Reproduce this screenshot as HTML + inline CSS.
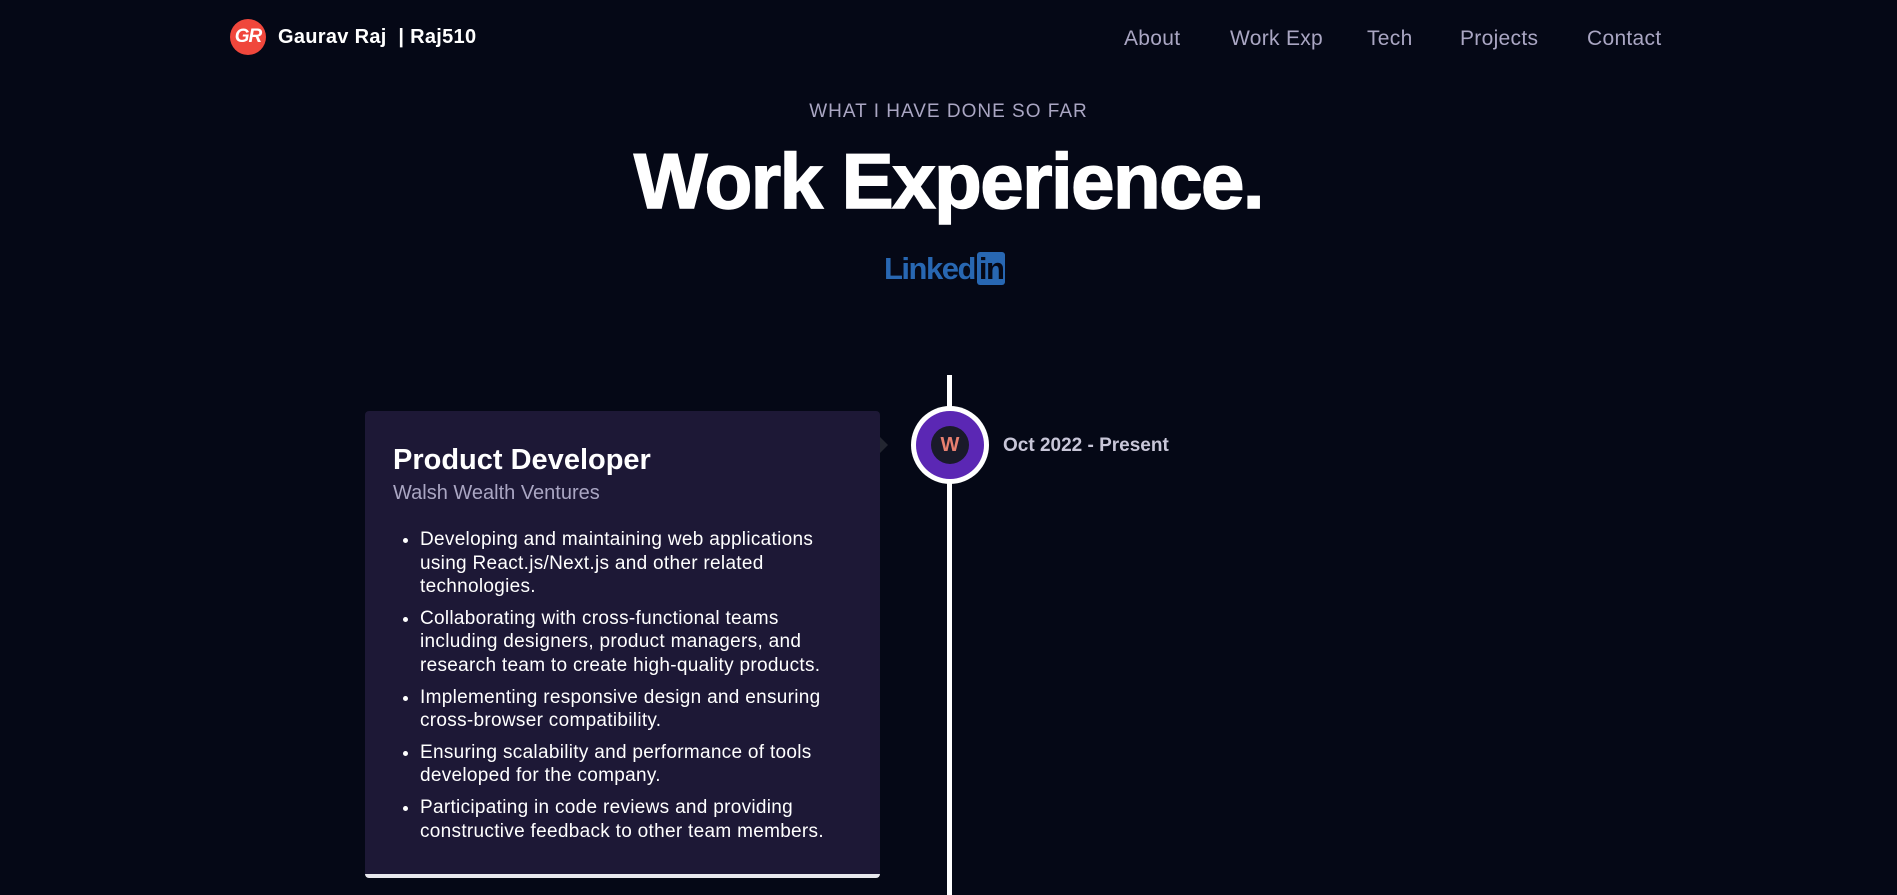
<!DOCTYPE html>
<html><head><meta charset="utf-8"><style>
*{margin:0;padding:0;box-sizing:border-box}
body{width:1897px;height:883px;background:#050816;overflow:hidden;font-family:"Liberation Sans",sans-serif;position:relative;color:#fff}
.abs{position:absolute}
.logo{left:230px;top:19px;width:36px;height:36px;border-radius:50%;background:#f0473c;color:#fff;font-weight:bold;font-size:19px;line-height:36px;text-align:center;letter-spacing:-1px;font-style:italic}
.brand{left:278px;top:26px;font-size:20px;font-weight:bold;letter-spacing:0.3px}
.nav{top:27px;font-size:21px;color:#aaa6c3;letter-spacing:0.3px}
.sub{left:0;width:1897px;text-align:center;top:101px;font-size:19px;color:#aaa6c3;letter-spacing:1px}
.title{left:0;width:1897px;text-align:center;top:136px;font-size:78px;font-weight:900;letter-spacing:-1.5px;-webkit-text-stroke:1.5px #fff}
.li{left:884px;top:251px;font-size:31px;font-weight:bold;color:#2867b2;letter-spacing:-1.5px}
.li span{display:inline-block;background:#2867b2;color:#050816;border-radius:3px;padding:0 2px;margin-left:2px;line-height:33px}
.line{left:947px;top:375px;width:5px;height:520px;background:#fff}
.circ{left:911px;top:406px;width:78px;height:78px;border-radius:50%;background:#fff;padding:5px}
.circ div{width:68px;height:68px;border-radius:50%;background:#5b27b4;display:flex;align-items:center;justify-content:center}
.circ div span{width:38px;height:38px;border-radius:50%;background:#1a1a2a;color:#e88070;font-weight:900;font-size:20px;line-height:38px;text-align:center}
.date{left:1003px;top:435px;font-size:19px;font-weight:bold;color:#c8c6d8}
.card{left:365px;top:411px;width:515px;height:467px;background:#1d1836;border-radius:4px;border-bottom:4px solid #e8e8ee}
.arrow{left:880px;top:437px;width:0;height:0;border-top:8px solid transparent;border-bottom:8px solid transparent;border-left:8px solid #232631}
h3{position:absolute;left:28px;top:33px;font-size:29px;font-weight:bold}
.co{position:absolute;left:28px;top:71px;font-size:20px;color:#aaa6c3}
ul{position:absolute;left:55px;top:117px;font-size:19px;letter-spacing:0.3px;line-height:23.6px;white-space:nowrap;color:#fff}
li{margin-bottom:8px;padding-left:0}
</style></head><body>
<div class="abs logo">GR</div>
<div class="abs brand">Gaurav Raj &nbsp;| Raj510</div>
<div class="abs nav" style="left:1124px">About</div>
<div class="abs nav" style="left:1230px">Work Exp</div>
<div class="abs nav" style="left:1367px">Tech</div>
<div class="abs nav" style="left:1460px">Projects</div>
<div class="abs nav" style="left:1587px">Contact</div>
<div class="abs sub">WHAT I HAVE DONE SO FAR</div>
<div class="abs title">Work Experience.</div>
<div class="abs li">Linked<span>in</span></div>
<div class="abs line"></div>
<div class="abs circ"><div><span>W</span></div></div>
<div class="abs date">Oct 2022 - Present</div>
<div class="abs arrow"></div>
<div class="abs card">
<h3>Product Developer</h3>
<div class="co">Walsh Wealth Ventures</div>
<ul>
<li>Developing and maintaining web applications<br>using React.js/Next.js and other related<br>technologies.</li>
<li>Collaborating with cross-functional teams<br>including designers, product managers, and<br>research team to create high-quality products.</li>
<li>Implementing responsive design and ensuring<br>cross-browser compatibility.</li>
<li>Ensuring scalability and performance of tools<br>developed for the company.</li>
<li>Participating in code reviews and providing<br>constructive feedback to other team members.</li>
</ul>
</div>
</body></html>
